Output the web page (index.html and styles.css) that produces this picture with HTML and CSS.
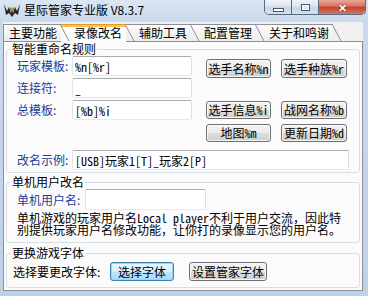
FILE: index.html
```html
<!DOCTYPE html>
<html lang="zh-CN">
<head>
  <meta charset="UTF-8">
  <title>星际管家专业版 V8.3.7</title>
  <link rel="stylesheet" href="styles.css">
</head>
<body>
  <div class="window">
    <div class="titlebar">
      <svg class="app-icon" width="18" height="15" viewBox="0 0 18 15">
        <path d="M1 1 L4 8 L6 4 L8 10 L9 5 L10 10 L12 4 L14 8 L17 1 L15 12 L12 10 L9 14 L6 10 L3 12 Z" fill="#2a2522"/>
        <path d="M6 4 L8 10 L9 5 Z M12 4 L10 10 L9 5 Z" fill="#a88f5c"/>
      </svg>
      <span class="title">星际管家专业版 V8.3.7</span>
      <div class="caption">
        <span class="cap-btn cap-min"><i></i></span>
        <span class="cap-btn cap-max"><i></i></span>
        <span class="cap-btn cap-close">✕</span>
      </div>
    </div>

    <div class="client">
      <div class="tabs">
        <div class="tab">主要功能</div>
        <div class="tab active">录像改名</div>
        <div class="tab">辅助工具</div>
        <div class="tab">配置管理</div>
        <div class="tab">关于和鸣谢</div>
      </div>

      <div class="page">
        <fieldset class="group">
          <legend>智能重命名规则</legend>
          <div class="rules">
            <div class="fields">
              <div class="field"><label>玩家模板:</label><input class="box" type="text" value="%n[%r]"></div>
              <div class="field"><label>连接符:</label><input class="box" type="text" value="_"></div>
              <div class="field"><label>总模板:</label><input class="box" type="text" value="[%b]%i"></div>
            </div>
            <div class="buttons">
              <div class="btn-row first"><button class="btn">选手名称%n</button><button class="btn">选手种族%r</button></div>
              <div class="btn-row"><button class="btn">选手信息%i</button><button class="btn">战网名称%b</button></div>
              <div class="btn-row"><button class="btn">地图%m</button><button class="btn">更新日期%d</button></div>
            </div>
          </div>
          <div class="field example"><label>改名示例:</label><input class="box wide" type="text" value="[USB]玩家1[T]_玩家2[P]"></div>
        </fieldset>

        <fieldset class="group">
          <legend>单机用户改名</legend>
          <div class="user-row"><label>单机用户名:</label><input class="box" type="text" value=""></div>
          <p class="desc">单机游戏的玩家用户名Local player不利于用户交流，因此特<br>别提供玩家用户名修改功能，让你打的录像显示您的用户名。</p>
        </fieldset>

        <fieldset class="group font-group">
          <legend>更换游戏字体</legend>
          <div class="font-row">
            <span class="font-label">选择要更改字体:</span>
            <button class="btn focus">选择字体</button>
            <button class="btn manager">设置管家字体</button>
          </div>
        </fieldset>
      </div>
    </div>
  </div>
</body>
</html>
```

FILE: styles.css
```css
html, body {
  margin:0;
  padding:0;
  background:#bed2e9;
}
body {
  font-family:"Noto Sans CJK SC", sans-serif;
  font-size:12px;
  color:#000;
}
.window {
  width:368px;
  height:296px;
  display:flex;
  flex-direction:column;
  overflow:hidden;
  background:linear-gradient(#dae6f3, #c9d9ec 22px, #bdd1e9);
}

/* title bar */
.titlebar {
  height:22px;
  flex:none;
  display:flex;
  align-items:center;
  padding:0 2px 0 3px;
}
.app-icon {
  margin:0 3px 1px 0;
}
.title {
  line-height:14px;
  margin-bottom:2px;
}
.caption {
  margin-left:auto;
  align-self:flex-start;
  display:flex;
  height:14px;
  border:1px solid #5a6a80;
  border-top:none;
  border-radius:0 0 5px 5px;
  overflow:hidden;
}
.cap-btn {
  display:flex;
  align-items:center;
  justify-content:center;
  width:26px;
  background:linear-gradient(#eef3f9, #dce5f0 45%, #c7d5e6 50%, #d4dfec);
}
.cap-btn + .cap-btn {
  border-left:1px solid #5a6a80;
}
.cap-min i {
  width:9px;
  height:2px;
  margin-top:5px;
  background:#fff;
  border:1px solid #4a5568;
}
.cap-max i {
  width:7px;
  height:5px;
  border:1px solid #4a5568;
  box-shadow:inset 0 0 0 1px #fff;
  background:#dfe6ef;
}
.cap-close {
  width:46px;
  color:#fff;
  font-size:11px;
  font-weight:bold;
  line-height:12px;
  text-shadow:0 0 1px #5b1a10, 0 0 1px #5b1a10;
  background:linear-gradient(#e9a898, #d6715d 45%, #c2412c 50%, #d17a63);
}

/* client area */
.client {
  flex:1;
  display:flex;
  flex-direction:column;
  margin:0 5px 5px 3px;
  background:#f0f0f0;
}
.tabs {
  display:flex;
  height:17px;
  margin-top:2px;
}
.tab {
  position:relative;
  box-sizing:border-box;
  height:17px;
  padding:0 4px 0 13px;
  line-height:15px;
  border-top:1px solid #8e9098;
  background:linear-gradient(#fbfbfb, #ececec);
}
.tab:first-child {
  border-left:1px solid #8e9098;
  padding-left:5px;
}
.tab::after {
  content:"";
  position:absolute;
  top:0;
  right:0;
  height:16px;
  border-left:1px solid #8e9098;
  transform:skewX(28deg);
  transform-origin:0 0;
  z-index:1;
}
.tab.active {
  height:18px;
  margin-bottom:-1px;
  border-top-color:#e39a2a;
  box-shadow:inset 0 2px #f6c454;
  background:#fcfcfc;
}

.page {
  flex:1;
  display:flex;
  flex-direction:column;
  padding:0 2px 2px;
  border:1px solid #8e9098;
  background:#fbfbfb;
}
.group {
  margin:0;
  padding:0 4px 2px;
  min-width:0;
  border:1px solid #d5dfe5;
  border-radius:3px;
}
.group + .group {
  margin-top:2px;
}
.group legend {
  padding:0 1px;
  line-height:14px;
}
.font-group {
  flex:1;
}
.group + .font-group {
  margin-top:3px;
}

.rules {
  display:flex;
  padding-left:6px;
}
.fields {
  width:175px;
  display:flex;
  flex-direction:column;
  gap:2px;
}
.field {
  display:flex;
  align-items:center;
  height:20px;
}
.field label {
  width:55px;
  flex:none;
  color:#1f3b96;
  line-height:14px;
}
.box {
  box-sizing:border-box;
  width:120px;
  height:20px;
  margin:0;
  padding:0 2px;
  border:1px solid;
  border-color:#abadb3 #dbdfe6 #e3e9ef #e2e3ea;
  border-radius:2px;
  background:#fff;
  font:12px "Noto Sans Mono CJK SC", "Liberation Mono", "Noto Sans CJK SC", monospace;
  color:#000;
  outline:none;
}
.box.wide {
  width:277px;
}
.example {
  margin-top:8px;
  padding-left:6px;
}

.buttons {
  margin-left:14px;
  padding-top:3px;
  display:flex;
  flex-direction:column;
}
.btn-row {
  display:flex;
  gap:10px;
  height:18px;
  margin-top:5px;
}
.btn-row.first {
  height:19px;
  margin:0 0 18px;
}
.btn-row .btn {
  width:65px;
}
.btn-row .btn + .btn {
  width:66px;
}
.btn {
  box-sizing:border-box;
  height:100%;
  padding:0;
  border:1px solid #707070;
  border-radius:3px;
  background:linear-gradient(#f3f3f3, #ebebeb 50%, #dddddd 50%, #cfcfcf);
  box-shadow:inset 0 0 0 1px rgba(255,255,255,0.75);
  font:12px "Noto Sans Mono CJK SC", "Liberation Mono", "Noto Sans CJK SC", monospace;
  line-height:14px;
  color:#000;
  white-space:nowrap;
}
.btn.focus {
  border-color:#3c7fb1;
  background:linear-gradient(#eaf6fd, #d9f0fc 50%, #bee6fd 50%, #a7d9f5);
  box-shadow:inset 0 0 0 1px #9fd4f2;
}

.user-row {
  display:flex;
  align-items:center;
  height:21px;
  padding-left:6px;
}
.user-row label {
  width:68px;
  color:#1f3b96;
  line-height:14px;
}
.user-row .box {
  width:121px;
  height:21px;
}
.desc {
  margin:2px 0 4px 6px;
  line-height:12px;
  font-family:"Noto Sans Mono CJK SC", "Liberation Mono", "Noto Sans CJK SC", monospace;
  white-space:nowrap;
}

.font-row {
  display:flex;
  align-items:center;
  height:19px;
  margin-top:2px;
  padding-left:2px;
}
.font-label {
  width:97px;
  flex:none;
  line-height:14px;
}
.font-row .btn {
  width:64px;
}
.font-row .btn.manager {
  width:78px;
  margin-left:15px;
}
```
